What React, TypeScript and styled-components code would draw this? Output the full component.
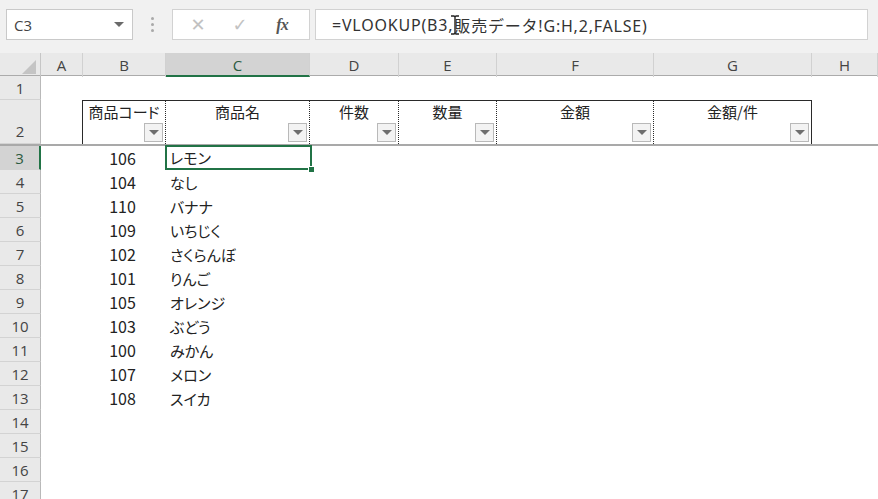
import React from 'react'
import styled, { createGlobalStyle } from 'styled-components'

const COLS = '41px 42px 83px 144px 89px 98px 157px 158px 1fr'

const GlobalStyle = createGlobalStyle`
  html, body {
    margin: 0;
    padding: 0;
    background: #ffffff;
    overflow: hidden;
  }
  body {
    font-family: "Noto Sans CJK JP", "Noto Sans", sans-serif;
  }
`

interface Item {
  code: number
  name: string
}

const items: Item[] = [
  { code: 106, name: 'レモン' },
  { code: 104, name: 'なし' },
  { code: 110, name: 'バナナ' },
  { code: 109, name: 'いちじく' },
  { code: 102, name: 'さくらんぼ' },
  { code: 101, name: 'りんご' },
  { code: 105, name: 'オレンジ' },
  { code: 103, name: 'ぶどう' },
  { code: 100, name: 'みかん' },
  { code: 107, name: 'メロン' },
  { code: 108, name: 'スイカ' },
]

const headers = ['商品コード', '商品名', '件数', '数量', '金額', '金額/件']
const letters = ['A', 'B', 'C', 'D', 'E', 'F', 'G', 'H']

const FilterButton = () => (
  <StyledFilter>
    <StyledCaret />
  </StyledFilter>
)

// mouse text cursor sitting over the formula
const IBeam = () => (
  <StyledIBeam width="10" height="20" viewBox="0 0 10 20">
    <path d="M1 1 H4 L5 2 L6 1 H9 M5 2 V18 M1 19 H4 L5 18 L6 19 H9" stroke="#222" strokeWidth="1.4" fill="none" />
  </StyledIBeam>
)

const App: React.FC = () => {
  const emptyRows = [14, 15, 16, 17]

  return (
    <StyledApp>
      <GlobalStyle />
      <StyledTopBar>
        <StyledNameBox>
          <span>C3</span>
          <StyledNameCaret />
        </StyledNameBox>
        <StyledGrip>
          <i />
          <i />
          <i />
        </StyledGrip>
        <StyledButtons>
          <StyledGlyph>✕</StyledGlyph>
          <StyledGlyph>✓</StyledGlyph>
          <StyledFx>fx</StyledFx>
        </StyledButtons>
        <StyledFormula>
          <span>=VLOOKUP(B3,</span>
          <IBeam />
          <span>販売データ!G:H,2,FALSE)</span>
        </StyledFormula>
      </StyledTopBar>

      <StyledColHeaderRow>
        <StyledCorner>
          <svg width="14" height="14" viewBox="0 0 14 14">
            <polygon points="14,0 14,14 0,14" fill="#c4c4c4" />
          </svg>
        </StyledCorner>
        {letters.map((l) => (
          <StyledColCell key={l} $active={l === 'C'}>
            {l}
          </StyledColCell>
        ))}
      </StyledColHeaderRow>

      <StyledRow $h={24}>
        <StyledRowHead>1</StyledRowHead>
      </StyledRow>

      <StyledRow $h={46} $frozen>
        <StyledRowHead $tall>2</StyledRowHead>
        <div />
        {headers.map((h, i) => (
          <StyledHeadCell key={h} $first={i === 0} $last={i === headers.length - 1}>
            <StyledHeadText>{h}</StyledHeadText>
            <FilterButton />
          </StyledHeadCell>
        ))}
      </StyledRow>

      {items.map((item, i) => (
        <StyledRow $h={24} key={item.code}>
          <StyledRowHead $active={i === 0}>{i + 3}</StyledRowHead>
          <div />
          <StyledCode>{item.code}</StyledCode>
          <StyledName $selected={i === 0}>
            {item.name}
            {i === 0 && <StyledHandle />}
          </StyledName>
        </StyledRow>
      ))}

      {emptyRows.map((n) => (
        <StyledRow $h={24} key={n}>
          <StyledRowHead>{n}</StyledRowHead>
        </StyledRow>
      ))}
    </StyledApp>
  )
}

const StyledApp = styled.div`
  width: 878px;
  height: 499px;
  overflow: hidden;
  display: flex;
  flex-direction: column;
  background: #ffffff;
`

const StyledTopBar = styled.div`
  height: 53px;
  flex: none;
  display: flex;
  align-items: flex-start;
  padding: 9px 10px 0 6px;
  box-sizing: border-box;
  background: #f1f1f1;
`

const StyledNameBox = styled.div`
  width: 127px;
  height: 31px;
  box-sizing: border-box;
  border: 1px solid #c9c9c9;
  background: #ffffff;
  display: flex;
  align-items: center;
  justify-content: space-between;
  padding: 0 8px 0 7px;
  font-family: "Open Sans", "Noto Sans", sans-serif;
  font-size: 15px;
  color: #444444;
`

const StyledNameCaret = styled.span`
  width: 0;
  height: 0;
  border-left: 5px solid transparent;
  border-right: 5px solid transparent;
  border-top: 5px solid #6a6a6a;
`

const StyledGrip = styled.div`
  width: 39px;
  height: 31px;
  display: flex;
  flex-direction: column;
  align-items: center;
  justify-content: center;
  gap: 3px;

  i {
    width: 3px;
    height: 3px;
    border-radius: 50%;
    background: #a9a9a9;
  }
`

const StyledButtons = styled.div`
  width: 138px;
  height: 31px;
  box-sizing: border-box;
  border: 1px solid #d2d2d2;
  background: #ffffff;
  display: flex;
  align-items: center;
  justify-content: space-around;
  padding: 0 6px 0 4px;
`

const StyledGlyph = styled.span`
  font-family: "DejaVu Sans", sans-serif;
  font-size: 18px;
  color: #c2c2c2;
  width: 30px;
  text-align: center;
`

const StyledFx = styled.span`
  font-family: "Liberation Serif", serif;
  font-style: italic;
  font-weight: 700;
  font-size: 16px;
  color: #555555;
  width: 30px;
  text-align: center;
  letter-spacing: -1px;
`

const StyledFormula = styled.div`
  flex: 1;
  height: 31px;
  margin-left: 5px;
  box-sizing: border-box;
  border: 1px solid #d2d2d2;
  background: #ffffff;
  display: flex;
  align-items: center;
  padding-left: 16px;
  font-family: "Noto Sans", "Noto Sans CJK JP", sans-serif;
  font-size: 16px;
  letter-spacing: 0.8px;
  color: #333333;
  white-space: nowrap;
`

const StyledIBeam = styled.svg`
  flex: none;
  margin: 0 -6px 0 -3px;
`

const StyledColHeaderRow = styled.div`
  display: grid;
  grid-template-columns: ${COLS};
  height: 23px;
  flex: none;
  box-sizing: border-box;
  border-bottom: 1px solid #ababab;
  background: #e9e9e9;
`

const StyledCorner = styled.div`
  display: flex;
  align-items: flex-end;
  justify-content: flex-end;
  padding: 0 4px 3px 0;
  border-right: 1px solid #c6c6c6;
`

const StyledColCell = styled.div<{ $active?: boolean }>`
  display: flex;
  align-items: center;
  justify-content: center;
  box-sizing: border-box;
  border-right: 1px solid #d1d1d1;
  border-bottom: ${({ $active }) => ($active ? '2px solid #217346' : 'none')};
  background: ${({ $active }) => ($active ? '#d3d3d3' : 'transparent')};
  font-family: "Open Sans", "Noto Sans", sans-serif;
  font-size: 15px;
  color: ${({ $active }) => ($active ? '#2c5a40' : '#444444')};
  padding-top: ${({ $active }) => ($active ? '2px' : '0')};
`

const StyledRow = styled.div<{ $h: number; $frozen?: boolean }>`
  display: grid;
  grid-template-columns: ${COLS};
  height: ${({ $h }) => $h}px;
  flex: none;
  box-sizing: border-box;
  border-bottom: ${({ $frozen }) => ($frozen ? '2px solid #a9a9a9' : 'none')};
`

const StyledRowHead = styled.div<{ $active?: boolean; $tall?: boolean }>`
  display: flex;
  align-items: ${({ $tall }) => ($tall ? 'flex-end' : 'center')};
  justify-content: center;
  padding-bottom: ${({ $tall }) => ($tall ? '2px' : '0')};
  box-sizing: border-box;
  background: ${({ $active }) => ($active ? '#d3d3d3' : '#e9e9e9')};
  border-right: ${({ $active }) => ($active ? '2px solid #217346' : '1px solid #b9b9b9')};
  border-bottom: 1px solid #d3d3d3;
  font-family: "Open Sans", "Noto Sans", sans-serif;
  font-size: 15px;
  color: ${({ $active }) => ($active ? '#2c5a40' : '#444444')};
`

const StyledHeadCell = styled.div<{ $first?: boolean; $last?: boolean }>`
  display: flex;
  flex-direction: column;
  align-items: center;
  justify-content: space-between;
  box-sizing: border-box;
  border-top: 1px solid #2a2a2a;
  border-left: ${({ $first }) => ($first ? '1px solid #2a2a2a' : 'none')};
  border-right: ${({ $last }) => ($last ? '1px solid #2a2a2a' : '1px dotted #2a2a2a')};
  margin-left: ${({ $first }) => ($first ? '-1px' : '0')};
  padding: 0 2px 2px 0;
`

const StyledHeadText = styled.span`
  font-size: 15px;
  line-height: 22px;
  color: #222222;
  white-space: nowrap;
  font-feature-settings: "palt";
  padding-left: 2px;
`

const StyledFilter = styled.div`
  align-self: flex-end;
  width: 19px;
  height: 19px;
  box-sizing: border-box;
  border: 1px solid #b9b9b9;
  background: #f3f3f3;
  display: flex;
  align-items: center;
  justify-content: center;
`

const StyledCaret = styled.span`
  width: 0;
  height: 0;
  border-left: 5px solid transparent;
  border-right: 5px solid transparent;
  border-top: 5px solid #6e6e6e;
`

const StyledCode = styled.div`
  display: flex;
  align-items: center;
  justify-content: center;
  padding-right: 4px;
  font-size: 16px;
  color: #222222;
`

const StyledName = styled.div<{ $selected?: boolean }>`
  position: relative;
  display: flex;
  align-items: center;
  box-sizing: border-box;
  margin: ${({ $selected }) => ($selected ? '-1px -2px 0 -1px' : '0')};
  padding-left: ${({ $selected }) => ($selected ? '3px' : '4px')};
  border: ${({ $selected }) => ($selected ? '2px solid #217346' : 'none')};
  font-size: 15px;
  color: #222222;
  font-feature-settings: "palt";
  white-space: nowrap;
`

const StyledHandle = styled.span`
  position: absolute;
  right: -5px;
  bottom: -5px;
  width: 7px;
  height: 7px;
  background: #217346;
  border: 1px solid #ffffff;
  box-sizing: border-box;
`

export default App
